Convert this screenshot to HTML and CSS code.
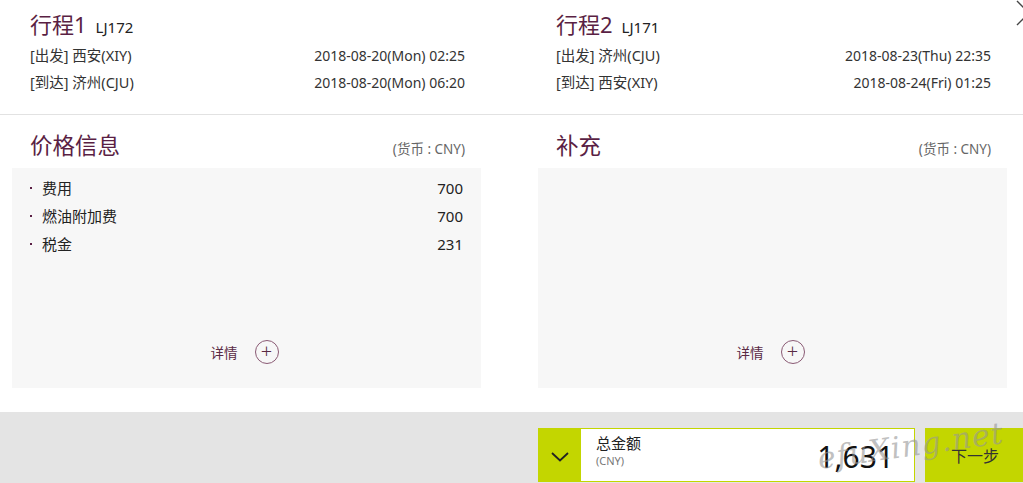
FILE: index.html
```html
<!DOCTYPE html>
<html lang="zh-CN">
<head>
    <meta charset="UTF-8">
    <meta name="viewport" content="width=device-width, initial-scale=1.0">
    <title>行程确认</title>
    <link rel="stylesheet" href="styles.css">
</head>
<body>

    <button class="close" aria-label="关闭">
        <svg width="28" height="28" viewBox="0 0 28 28"><path d="M2 1 L26 25 M26 1 L2 25" stroke="#444" stroke-width="1.4" fill="none"/></svg>
    </button>

    <div class="trips">
        <div class="col">
            <div class="trip-head"><span class="trip-title">行程1</span><span class="flight">LJ172</span></div>
            <div class="row"><span>[出发] 西安(XIY)</span><span>2018-08-20(Mon) 02:25</span></div>
            <div class="row"><span>[到达] 济州(CJU)</span><span>2018-08-20(Mon) 06:20</span></div>
        </div>
        <div class="col">
            <div class="trip-head"><span class="trip-title">行程2</span><span class="flight">LJ171</span></div>
            <div class="row"><span>[出发] 济州(CJU)</span><span>2018-08-23(Thu) 22:35</span></div>
            <div class="row"><span>[到达] 西安(XIY)</span><span>2018-08-24(Fri) 01:25</span></div>
        </div>
    </div>

    <div class="info">
        <div class="col">
            <div class="sec-head"><h2>价格信息</h2><span class="currency">(货币 : CNY)</span></div>
            <div class="box">
                <ul class="fees">
                    <li><span>费用</span><span>700</span></li>
                    <li><span>燃油附加费</span><span>700</span></li>
                    <li><span>税金</span><span>231</span></li>
                </ul>
                <div class="more">详情 <span class="plus">+</span></div>
            </div>
        </div>
        <div class="col">
            <div class="sec-head"><h2>补充</h2><span class="currency">(货币 : CNY)</span></div>
            <div class="box">
                <ul class="fees"></ul>
                <div class="more">详情 <span class="plus">+</span></div>
            </div>
        </div>
    </div>

    <div class="footer">
        <div class="total">
            <div class="toggle">
                <svg width="18" height="10" viewBox="0 0 18 10"><path d="M1 1 L9 8.5 L17 1" stroke="#222" stroke-width="1.8" fill="none"/></svg>
            </div>
            <div class="sum">
                <div class="sum-label">
                    <span class="sum-name">总金额</span>
                    <span class="sum-cur">(CNY)</span>
                </div>
                <div class="sum-value">1,631</div>
            </div>
        </div>
        <button class="next">下一步</button>
        <span class="watermark">efuXing.net</span>
    </div>

</body>
</html>
```

FILE: styles.css
```css
* {
    margin: 0;
    padding: 0;
    box-sizing: border-box;
    font-family: "Noto Sans", "Noto Sans CJK SC", sans-serif;
}

body {
    background: #fff;
    color: #333;
    width: 1023px;
    height: 483px;
    overflow: hidden;
    position: relative;
}

.close {
    position: absolute;
    top: 0;
    left: 1015px;
    background: none;
    border: none;
}

.trips, .info {
    display: grid;
    grid-template-columns: 469px 469px;
    column-gap: 57px;
    padding: 0 16px 0 12px;
}

.trips {
    padding-top: 7px;
    height: 115px;
    border-bottom: 1px solid #e2e2e2;
}

.trips .col {
    padding: 0 16px 0 18px;
}

.trip-head {
    display: flex;
    align-items: baseline;
    height: 35px;
}

.trip-title {
    font-size: 22px;
    color: #5a1f44;
    line-height: 34px;
}

.flight {
    font-size: 15px;
    color: #222;
    margin-left: 9px;
}

.row {
    display: flex;
    justify-content: space-between;
    font-size: 14.5px;
    line-height: 27px;
    color: #333;
}

.row span:last-child {
    font-size: 14px;
}

.info {
    padding-top: 13px;
}

.sec-head {
    display: flex;
    justify-content: space-between;
    align-items: baseline;
    padding: 0 16px 0 18px;
    height: 40px;
}

.sec-head h2 {
    font-size: 22.5px;
    font-weight: normal;
    color: #5a1f44;
    line-height: 36px;
}

.currency {
    font-size: 13.5px;
    color: #666;
}

.box {
    background: #f7f7f7;
    height: 220px;
    display: flex;
    flex-direction: column;
    padding: 6px 18px 24px 18px;
}

.fees {
    list-style: none;
    flex: 1;
}

.fees li {
    display: flex;
    justify-content: space-between;
    font-size: 15px;
    line-height: 28px;
    color: #222;
    padding-left: 12px;
    position: relative;
}

.fees li::before {
    content: "";
    position: absolute;
    left: 0;
    top: 13px;
    width: 2px;
    height: 2px;
    background: #5a1f44;
}

.more {
    display: flex;
    align-items: center;
    justify-content: center;
    gap: 17px;
    font-size: 13.5px;
    color: #5a2a44;
    padding-right: 4px;
}

.plus {
    display: inline-flex;
    align-items: center;
    justify-content: center;
    width: 24px;
    height: 24px;
    border: 1.5px solid #8a5a74;
    border-radius: 50%;
    font-size: 20px;
    font-weight: 300;
    line-height: 1;
    color: #5a2a44;
    padding-bottom: 2px;
}

.footer {
    position: absolute;
    left: 0;
    right: 0;
    top: 412px;
    height: 71px;
    background: #e4e4e4;
    display: flex;
    justify-content: flex-end;
    padding-top: 16px;
}

.total {
    display: flex;
    width: 377px;
    height: 54px;
    border: 1px solid #c3d600;
    background: #fff;
}

.toggle {
    width: 42px;
    background: #c3d600;
    display: flex;
    align-items: center;
    justify-content: center;
    padding-top: 4px;
}

.sum {
    flex: 1;
    display: flex;
    justify-content: space-between;
    padding: 4px 20px 0 15px;
}

.sum-label {
    display: flex;
    flex-direction: column;
}

.sum-name {
    font-size: 15px;
    color: #222;
    line-height: 21px;
}

.sum-cur {
    font-size: 11px;
    color: #777;
    line-height: 14px;
}

.sum-value {
    font-size: 30px;
    color: #111;
    line-height: 48px;
}

.next {
    width: 98px;
    height: 54px;
    margin-left: 10px;
    border: none;
    background: #c3d600;
    color: #333;
    font-size: 16px;
    text-align: right;
    padding-right: 24px;
}

.watermark {
    position: absolute;
    left: 817px;
    top: 16px;
    font-family: "DejaVu Serif", serif;
    font-style: italic;
    font-size: 30px;
    color: rgba(150, 150, 150, 0.6);
    transform: rotate(-8deg);
    letter-spacing: 1px;
}
```
